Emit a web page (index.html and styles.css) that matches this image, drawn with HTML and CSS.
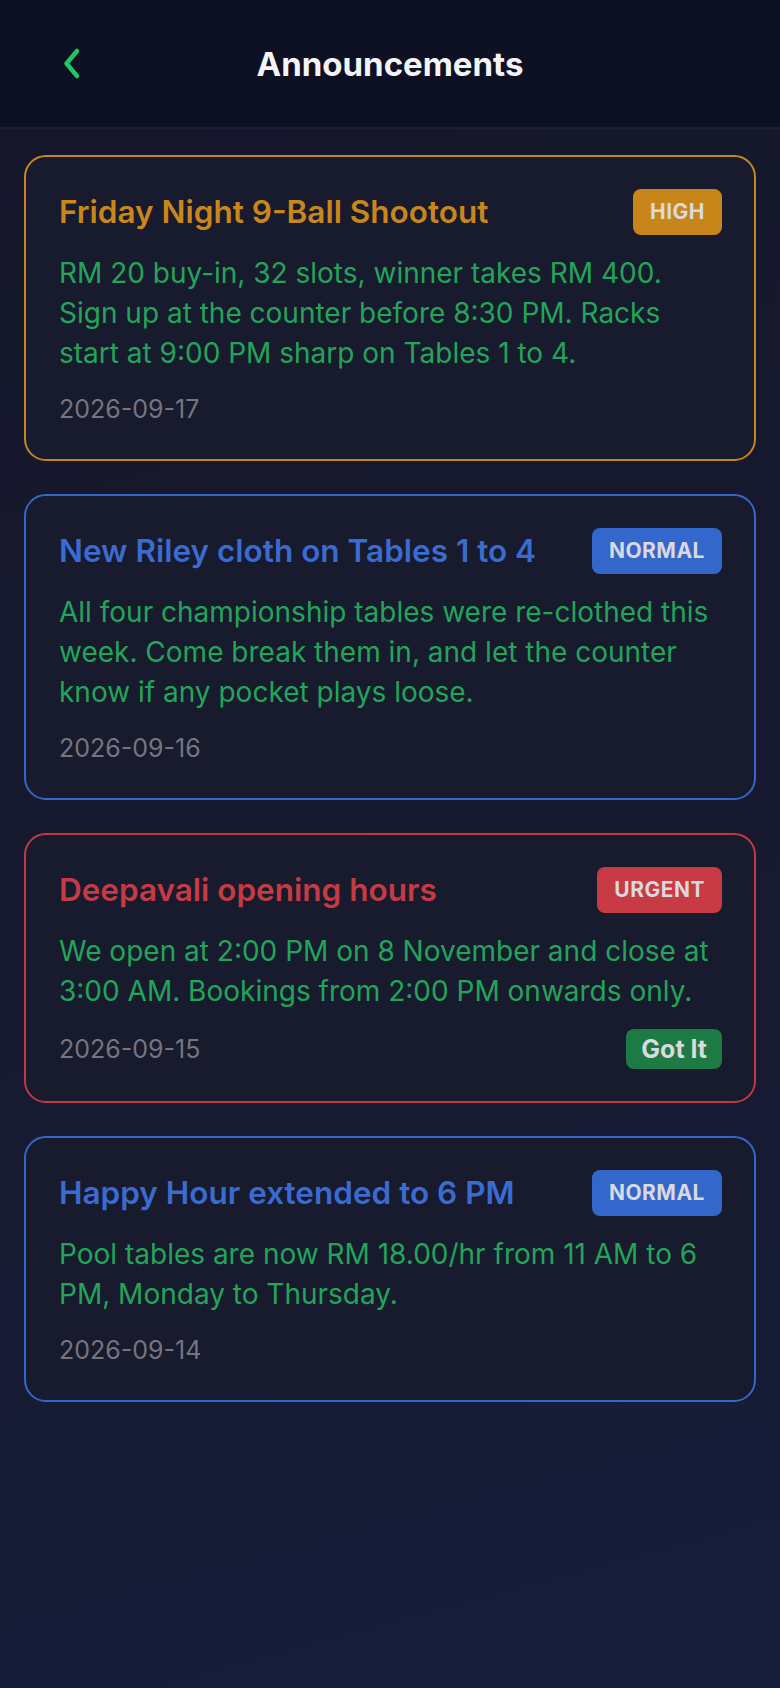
FILE: index.html
```html
<!DOCTYPE html>
<html lang="en">
<head>
    <meta charset="UTF-8">
    <meta name="viewport" content="width=device-width, initial-scale=1.0">
    <title>Announcements</title>
    <link rel="stylesheet" href="styles.css">
</head>
<body>
    <div class="header">
        <button class="back-button" aria-label="Back">
            <svg width="40" height="40" viewBox="0 0 40 40" fill="none">
                <polyline points="24,7 13.5,19.5 24,32" stroke="#22c55e" stroke-width="4.5" stroke-linecap="round" stroke-linejoin="round" />
            </svg>
        </button>
        <h1 class="header-title">Announcements</h1>
    </div>

    <div class="list">
        <div class="card high">
            <div class="card-head">
                <h2 class="card-title">Friday Night 9-Ball Shootout</h2>
                <span class="badge">HIGH</span>
            </div>
            <p class="card-body">RM 20 buy-in, 32 slots, winner takes RM 400. Sign up at the counter before 8:30 PM. Racks start at 9:00 PM sharp on Tables 1 to 4.</p>
            <div class="card-foot">
                <span class="date">2026-09-17</span>
            </div>
        </div>

        <div class="card normal">
            <div class="card-head">
                <h2 class="card-title">New Riley cloth on Tables 1 to 4</h2>
                <span class="badge">NORMAL</span>
            </div>
            <p class="card-body">All four championship tables were re-clothed this week. Come break them in, and let the counter know if any pocket plays loose.</p>
            <div class="card-foot">
                <span class="date">2026-09-16</span>
            </div>
        </div>

        <div class="card urgent">
            <div class="card-head">
                <h2 class="card-title">Deepavali opening hours</h2>
                <span class="badge">URGENT</span>
            </div>
            <p class="card-body">We open at 2:00 PM on 8 November and close at 3:00 AM. Bookings from 2:00 PM onwards only.</p>
            <div class="card-foot">
                <span class="date">2026-09-15</span>
                <button class="ack-button">Got It</button>
            </div>
        </div>

        <div class="card normal">
            <div class="card-head">
                <h2 class="card-title">Happy Hour extended to 6 PM</h2>
                <span class="badge">NORMAL</span>
            </div>
            <p class="card-body">Pool tables are now RM 18.00/hr from 11 AM to 6 PM, Monday to Thursday.</p>
            <div class="card-foot">
                <span class="date">2026-09-14</span>
            </div>
        </div>
    </div>
</body>
</html>
```

FILE: styles.css
```css
* {
    margin: 0;
    padding: 0;
    box-sizing: border-box;
    font-family: Inter, 'Noto Sans', 'Liberation Sans', sans-serif;
}

body {
    min-height: 100vh;
    background: linear-gradient(165deg, #15162a 0%, #171a30 60%, #161d3b 100%);
    display: flex;
    flex-direction: column;
}

.header {
    height: 129px;
    background: #0e1023;
    border-bottom: 2px solid #1c1f33;
    display: flex;
    align-items: center;
    justify-content: center;
    position: relative;
}

.back-button {
    position: absolute;
    left: 53px;
    top: 44px;
    width: 40px;
    height: 40px;
    background: none;
    border: none;
    cursor: pointer;
}

.header-title {
    color: #f4f4f6;
    font-size: 33px;
    font-weight: 700;
}

.list {
    display: flex;
    flex-direction: column;
    gap: 33px;
    padding: 26px 24px;
}

.card {
    background: #181a2e;
    border: 2px solid;
    border-radius: 22px;
    padding: 32px 32px 32px 33px;
    display: flex;
    flex-direction: column;
    gap: 18px;
}

.card-head {
    display: flex;
    justify-content: space-between;
    align-items: center;
    gap: 16px;
}

.card-title {
    font-size: 31.5px;
    font-weight: 600;
    line-height: 1.3;
}

.badge {
    flex-shrink: 0;
    padding: 0 17px;
    height: 46px;
    line-height: 46px;
    border-radius: 8px;
    color: #d9d9de;
    font-size: 21px;
    font-weight: 700;
    letter-spacing: 0.5px;
}

.card-body {
    color: #22a559;
    font-size: 28px;
    line-height: 40px;
}

.card-foot {
    display: flex;
    justify-content: space-between;
    align-items: center;
    min-height: 36px;
}

.date {
    color: #75757f;
    font-size: 25px;
}

.ack-button {
    background: #1d7a44;
    color: #d9d9de;
    border: none;
    border-radius: 8px;
    padding: 0 15px;
    height: 40px;
    font-size: 25px;
    font-weight: 700;
    cursor: pointer;
}

/* Priority colours */
.card.high { border-color: #c7861c; }
.card.high .card-title { color: #c9871b; }
.card.high .badge { background: #c8861a; }

.card.normal { border-color: #3467c8; }
.card.normal .card-title { color: #3a6bd0; }
.card.normal .badge { background: #3467cc; }

.card.urgent { border-color: #c03a46; }
.card.urgent .card-title { color: #c63a44; }
.card.urgent .badge { background: #c83a44; }
```
